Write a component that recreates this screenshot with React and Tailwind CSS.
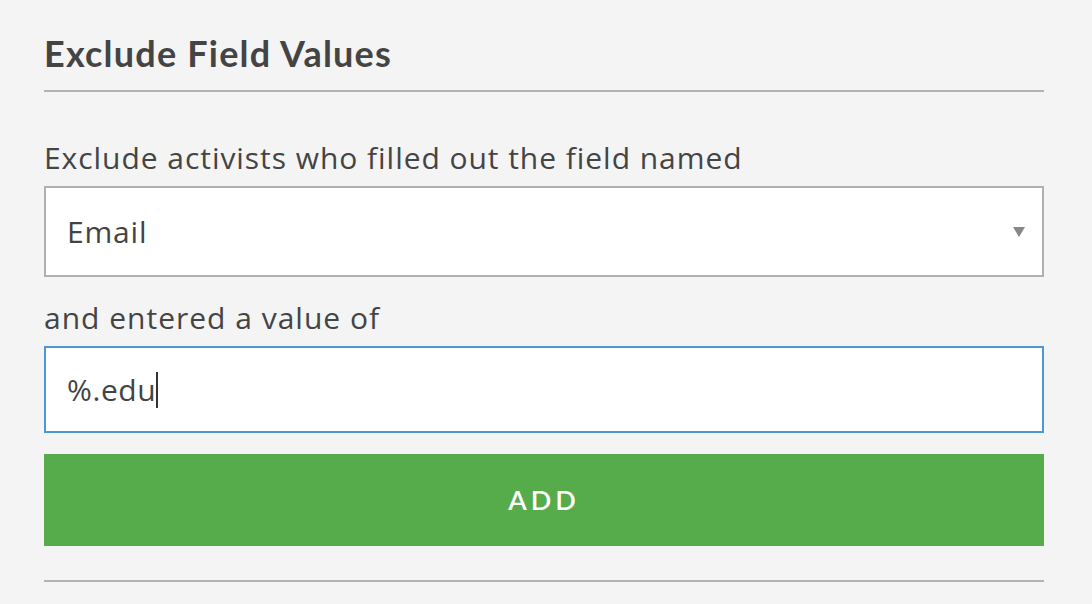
import React from 'react';

export default function App() {
  return (
    <div className="w-[1092px] h-[604px] bg-[#f4f4f4] overflow-hidden" style={{ fontFamily: '"Open Sans", sans-serif' }}>
      <div className="ml-[44px] w-[1000px] pt-[29px]">
        <h2 className="text-[36px] leading-[48px] font-bold text-[#444] tracking-[1.2px]" style={{ fontFamily: 'Lato, sans-serif' }}>
          Exclude Field Values
        </h2>
        <div className="mt-[13px] h-[2px] bg-[#b3b3b3]" />

        <p className="mt-[48px] text-[30px] leading-[36px] text-[#444] tracking-[0.95px]">
          Exclude activists who filled out the field named
        </p>
        <div className="mt-[10px] h-[91px] bg-white border-2 border-[#b0b0b0] flex items-center justify-between pl-[21px] pr-[17px]">
          <span className="text-[30px] text-[#444] tracking-[0.8px]">Email</span>
          <svg width="12" height="10" viewBox="0 0 12 10">
            <path d="M0 0 L12 0 L6 10 Z" fill="#888" />
          </svg>
        </div>

        <p className="mt-[23px] text-[30px] leading-[36px] text-[#444] tracking-[1px]">and entered a value of</p>
        <div className="mt-[10px] h-[87px] bg-white border-2 border-[#4a98d8] flex items-center pl-[21px]">
          <span className="text-[30px] text-[#444] tracking-[0.6px]">%.edu</span>
          <span className="w-[2px] h-[36px] bg-[#333]" />
        </div>

        <button className="mt-[21px] w-full h-[92px] bg-[#56ac4a] text-white text-[27px] font-semibold tracking-[4px] flex items-center justify-center" style={{ fontFamily: 'Lato, sans-serif' }}>
          ADD
        </button>

        <div className="mt-[34px] h-[2px] bg-[#b3b3b3]" />
      </div>
    </div>
  );
}
